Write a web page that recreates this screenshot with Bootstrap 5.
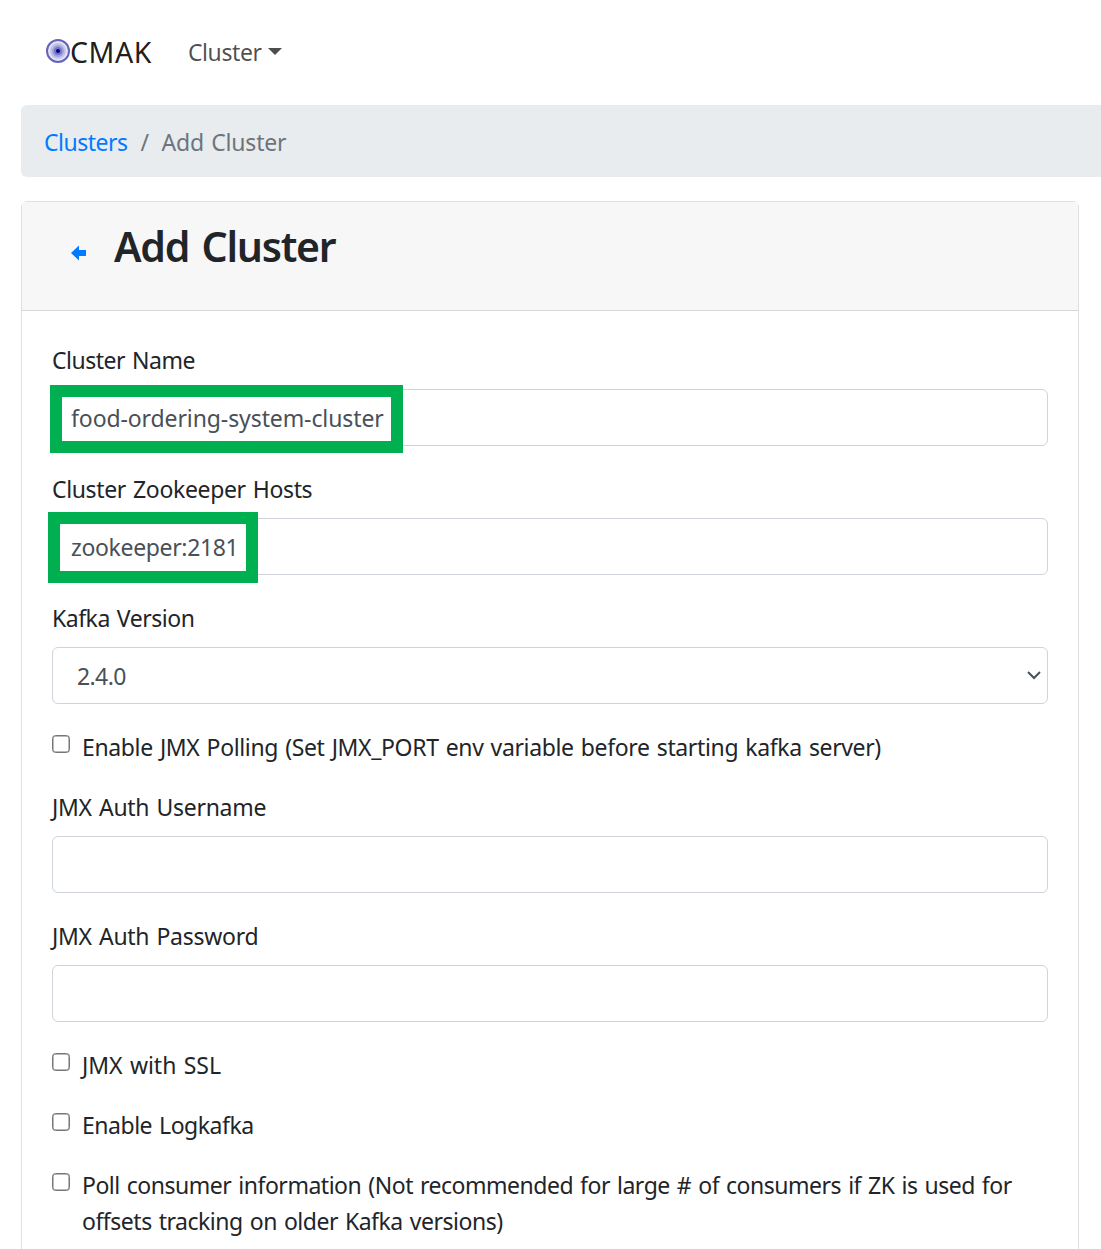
<!DOCTYPE html>
<html lang="en">
<head>
<meta charset="utf-8">
<meta name="viewport" content="width=device-width, initial-scale=1">
<title>CMAK - Add Cluster</title>
<link href="https://cdn.jsdelivr.net/npm/bootstrap@5.3.0/dist/css/bootstrap.min.css" rel="stylesheet">
<style>
html{font-size:24px}
body{font-family:"Noto Sans","Open Sans",sans-serif;font-size:23px;line-height:36px;color:#212529;background:#fff;letter-spacing:-.48px;word-spacing:1.5px;overflow:hidden}
.page-shell{width:1101px;height:1249px;overflow:hidden;padding-left:21px}
.top-bar{height:105px;padding:0 0 2px 25px}
.top-bar .logo{margin-bottom:2px}
.brand-text{font-size:28.5px;color:rgba(0,0,0,.9);letter-spacing:.55px}
.menu-link{color:rgba(0,0,0,.7);margin-left:36px;letter-spacing:-.4px}
.menu-link svg{margin-left:6px}
.crumbs{height:72px;width:1200px;padding:19px 23px 17px;margin-bottom:24px;background:#e9ecef;border-radius:6px;flex-wrap:nowrap}
.crumbs a{color:#007bff;letter-spacing:-.5px}
.crumbs .sep{padding:0 12px 0 13px}
.crumbs .sep,.crumbs .here{color:#6c757d}
.crumbs .here{letter-spacing:-.2px;margin-left:1px}
.form-panel{width:1058px;height:1200px;border:1px solid rgba(0,0,0,.125);border-radius:6px}
.panel-head{height:109px;padding:19px 0 0 49px;background:#f7f7f7;border-bottom:1px solid rgba(0,0,0,.125)}
.panel-head svg{margin-top:24px}
.panel-head h1{font-size:41px;line-height:50px;font-weight:600;letter-spacing:-1.25px;word-spacing:3px;margin:0 0 0 27px}
.panel-body{padding:30px}
.field{margin-bottom:24px}
.field>label{display:block;padding-top:1px;margin-bottom:11px}
.form-control{height:57px;padding:9px 18px;border:1px solid #ced4da;border-radius:6px;color:#495057;font-size:23px;line-height:36px;letter-spacing:-.35px;background:#fff}
.form-control.track-d{letter-spacing:-.1px}
select.form-control{padding-left:24px;letter-spacing:-.6px}
.chev{position:absolute;right:6px;top:23px}
.hl{position:absolute;border:12px solid #00b050;pointer-events:none}
.hl-name{left:-2px;top:-4px;width:353px;height:68px}
.hl-zk{left:-4px;top:-6px;width:210px;height:71px}
.tick{margin-bottom:24px;gap:12px}
.tick input{appearance:none;width:18px;height:18px;margin:7px 0 0;border:1px solid #767676;box-shadow:inset 0 0 0 .5px #767676;border-radius:3.5px;background:#fff;flex:none}
.tick label{padding-top:1px;margin-bottom:-1px;white-space:nowrap}
.track-a{letter-spacing:-.36px}
.track-b{letter-spacing:-.28px}
.track-c{letter-spacing:-.04px}
</style>
<script src="https://cdn.jsdelivr.net/npm/bootstrap@5.3.0/dist/js/bootstrap.bundle.min.js"></script>
</head>
<body>
<div class="page-shell">
  <nav class="top-bar d-flex align-items-center">
    <svg class="logo" width="24" height="24" viewBox="0 0 24 24"><circle cx="12" cy="12" r="11" fill="#e4e4f5" stroke="#6363bc" stroke-width="2"/><circle cx="12" cy="12" r="8" fill="#c3c3e8"/><circle cx="12" cy="12" r="6" fill="#a0a0da"/><circle cx="12" cy="12" r="4" fill="#7474c8"/><circle cx="12" cy="12" r="2" fill="#00008b"/></svg>
    <span class="brand-text">CMAK</span>
    <a class="menu-link text-decoration-none d-flex align-items-center" href="#">Cluster<svg width="14" height="7" viewBox="0 0 14 7"><path d="M0 0h14L7 7z" fill="#4d4d4d"/></svg></a>
  </nav>
  <div class="crumbs d-flex"><a class="text-decoration-none" href="#">Clusters</a><span class="sep">/</span><span class="here">Add Cluster</span></div>
  <main class="form-panel">
    <div class="panel-head d-flex align-items-start">
      <svg width="16" height="16" viewBox="0 0 16 16"><path d="M0 8l8-7.500V5h7v6H8v4.500z" fill="#007bff"/></svg>
      <h1>Add Cluster</h1>
    </div>
    <form class="panel-body">
      <div class="field"><label for="cname">Cluster Name</label><div class="position-relative"><input id="cname" class="form-control track-d" value="food-ordering-system-cluster"><div class="hl hl-name"></div></div></div>
      <div class="field"><label class="track-a" for="zk">Cluster Zookeeper Hosts</label><div class="position-relative"><input id="zk" class="form-control" value="zookeeper:2181"><div class="hl hl-zk"></div></div></div>
      <div class="field"><label for="ver">Kafka Version</label><div class="position-relative"><select id="ver" class="form-control"><option>2.4.0</option></select><svg class="chev" width="16" height="10" viewBox="0 0 16 10"><path d="M2 2l6 6 6-6" fill="none" stroke="#495057" stroke-width="2"/></svg></div></div>
      <div class="tick d-flex"><input id="jmx" type="checkbox"><label class="track-a" for="jmx">Enable JMX Polling (Set JMX_PORT env variable before starting kafka server)</label></div>
      <div class="field"><label class="track-b" for="user">JMX Auth Username</label><input id="user" class="form-control"></div>
      <div class="field"><label class="track-b" for="pass">JMX Auth Password</label><input id="pass" class="form-control"></div>
      <div class="tick d-flex"><input id="ssl" type="checkbox"><label class="track-c" for="ssl">JMX with SSL</label></div>
      <div class="tick d-flex"><input id="logk" type="checkbox"><label for="logk">Enable Logkafka</label></div>
      <div class="tick d-flex"><input id="poll" type="checkbox"><label for="poll">Poll consumer information (Not recommended for large # of consumers if ZK is used for<br>offsets tracking on older Kafka versions)</label></div>
    </form>
  </main>
</div>
</body>
</html>
